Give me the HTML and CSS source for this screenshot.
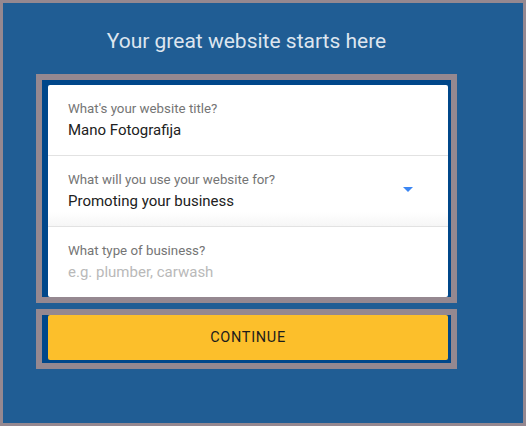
FILE: index.html
```html
<!DOCTYPE html>
<html>
<head>
<meta charset="utf-8">
<link rel="stylesheet" href="styles.css">
</head>
<body>
<div class="wrap">
  <h1 class="title">Your great website starts here</h1>
  <div class="frame frame-card">
    <div class="card">
      <div class="field">
        <div class="label">What's your website title?</div>
        <div class="value">Mano Fotografija</div>
      </div>
      <div class="field field-select">
        <div class="field-text">
          <div class="label">What will you use your website for?</div>
          <div class="value">Promoting your business</div>
        </div>
        <svg class="arrow" width="10" height="5" viewBox="0 0 10 5"><path d="M0 0h10L5 5z" fill="#3b86f3"/></svg>
      </div>
      <div class="field field-last">
        <div class="label">What type of business?</div>
        <div class="value placeholder">e.g. plumber, carwash</div>
      </div>
    </div>
  </div>
  <div class="frame frame-btn">
    <button class="btn">CONTINUE</button>
  </div>
</div>
</body>
</html>
```
FILE: styles.css
```css
html, body {
  margin: 0;
  padding: 0;
}
body {
  width: 526px;
  height: 426px;
  box-sizing: border-box;
  border: 3px solid #958890;
  background: #205d94;
  font-family: Roboto, "Noto Sans", sans-serif;
}
.wrap {
  width: 421px;
  margin-left: 33px;
  padding-top: 26px;
  display: flex;
  flex-direction: column;
}
.title {
  margin: 0 0 21px;
  font-size: 21px;
  line-height: 24px;
  font-weight: 400;
  color: #dde5ef;
  text-align: center;
}
.frame {
  border: 6px solid #958890;
  background: #00478a;
}
.frame-card {
  padding: 5px 3px 0 6px;
}
.frame-btn {
  margin-top: 6px;
  padding: 0 3px 3px 6px;
}
.card {
  background: #fff;
  border-radius: 2px;
  display: flex;
  flex-direction: column;
}
.field {
  height: 71px;
  box-sizing: border-box;
  padding: 16px 20px 0;
  border-bottom: 1px solid #e2e2e2;
}
.field-last {
  border-bottom: 0;
  height: 70px;
}
.field-select {
  display: flex;
  align-items: center;
  justify-content: space-between;
  padding-top: 1px;
  padding-right: 35px;
  background: linear-gradient(to bottom, #fff 80%, #f6f6f6 100%);
}
.label {
  font-size: 13.3px;
  line-height: 16px;
  color: #757575;
}
.value {
  margin-top: 3px;
  font-size: 15px;
  line-height: 20px;
  color: #212121;
}
.placeholder {
  color: #b9b9b9;
}
.arrow {
  display: block;
  margin-top: -5px;
}
.btn {
  display: block;
  width: 100%;
  height: 45px;
  border: 0;
  border-radius: 2px;
  background: #fcbf2b;
  font-family: Roboto, "Noto Sans", sans-serif;
  font-size: 14.5px;
  font-weight: 400;
  letter-spacing: 0.7px;
  color: #1c1c1c;
  padding: 0;
  cursor: pointer;
}
```
